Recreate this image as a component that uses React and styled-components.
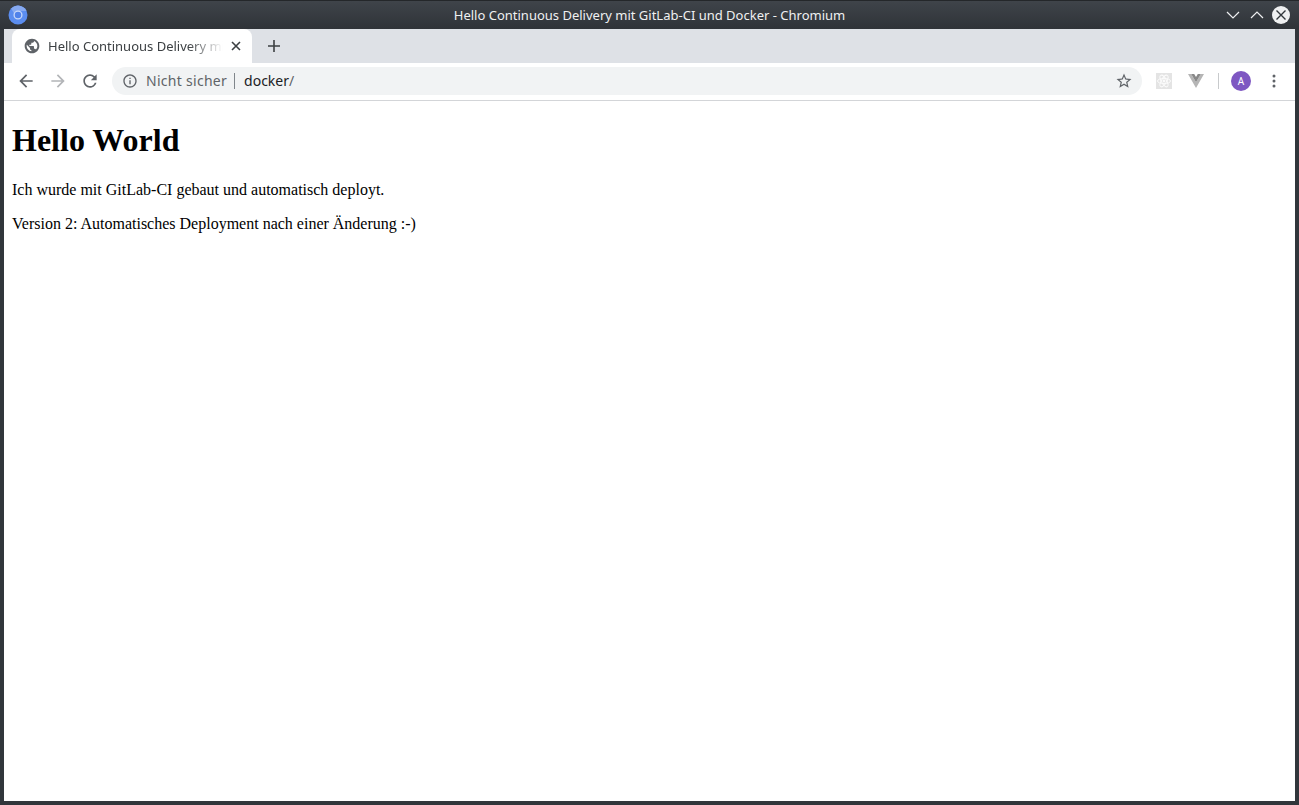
import styled, { createGlobalStyle } from "styled-components";

const GlobalStyle = createGlobalStyle`
  html, body {
    margin: 0;
    padding: 0;
    background: #31363b;
  }
`;

const Window = styled.div`
  width: 1299px;
  height: 805px;
  display: flex;
  flex-direction: column;
  overflow: hidden;
  background: #31363b;
`;

const TitleBar = styled.div`
  height: 29px;
  flex: none;
  display: grid;
  grid-template-columns: 1fr auto 1fr;
  align-items: center;
  padding: 0 9px 1px 8px;
  box-sizing: border-box;
  background: linear-gradient(#3f444a, #2f3338);
  border-top: 1px solid #24272a;
`;

const TitleText = styled.div`
  color: #eff0f1;
  font: 13px/16px "Noto Sans", sans-serif;
  padding-left: 1px;
`;

const WindowControls = styled.div`
  display: flex;
  align-items: center;
  justify-content: flex-end;
  gap: 10px;
`;

const CloseSvg = styled.svg`
  margin-left: -2px;
`;

const Body = styled.div`
  flex: 1;
  display: flex;
  flex-direction: column;
  margin: 0 4px 4px;
  background: #fff;
  min-height: 0;
`;

const TabStrip = styled.div`
  height: 34px;
  flex: none;
  display: flex;
  background: #dee1e6;
  padding-left: 8px;
  align-items: flex-end;
`;

const Tab = styled.div`
  width: 240px;
  height: 34px;
  box-sizing: border-box;
  background: #fff;
  border-radius: 8px 8px 0 0;
  display: flex;
  align-items: center;
  padding: 0 11px 0 12px;
  gap: 8px;
`;

const TabTitle = styled.div`
  flex: 1;
  min-width: 0;
  white-space: nowrap;
  font: 13px/16px "Noto Sans", sans-serif;
  color: #3c4043;
  -webkit-mask-image: linear-gradient(90deg, #000 80%, transparent 100%);
  mask-image: linear-gradient(90deg, #000 80%, transparent 100%);
`;

const NewTab = styled.div`
  margin-left: 16px;
  height: 34px;
  display: flex;
  align-items: center;
`;

const Toolbar = styled.div`
  height: 38px;
  flex: none;
  box-sizing: border-box;
  display: flex;
  align-items: center;
  background: #fff;
  border-bottom: 1px solid #d3d5d8;
  padding: 0 0 1px 12px;
`;

const NavButtons = styled.div`
  display: flex;
  align-items: center;
  gap: 12px;
  margin-right: 12px;
`;

const Omnibox = styled.div`
  width: 1030px;
  height: 28px;
  box-sizing: border-box;
  border-radius: 14px;
  background: #f1f3f4;
  display: flex;
  align-items: center;
  padding: 0 9px 0 10px;
`;

const SecurityLabel = styled.span`
  margin-left: 8px;
  font: 14px/28px "Noto Sans", sans-serif;
  letter-spacing: 0.28px;
  color: #5f6368;
`;

const Divider = styled.span`
  width: 1px;
  height: 16px;
  flex: none;
  margin-left: ${(p) => p.$gap}px;
  background: ${(p) => p.$color || "#80868b"};
`;

const Url = styled.span`
  margin-left: 9px;
  flex: 1;
  font: 14px/28px "Noto Sans", sans-serif;
  color: #202124;

  span {
    color: #5f6368;
  }
`;

const ToolbarIcons = styled.div`
  display: flex;
  align-items: center;
  margin-left: 14px;
`;

const Avatar = styled.div`
  width: 20px;
  height: 20px;
  border-radius: 50%;
  background: #7e57c2;
  color: #fff;
  font: 10px/20px "Noto Sans", sans-serif;
  text-align: center;
  margin: 0 21px 0 12px;
`;

const Page = styled.main`
  flex: 1;
  padding: 8px;
  font-family: "Liberation Serif", serif;
  font-size: 16px;
  color: #000;
  background: #fff;
`;

const Heading = styled.h1`
  font-size: 32px;
  font-weight: bold;
  line-height: 37px;
  margin: 13px 0 22px;
`;

const Paragraph = styled.p`
  margin: 0 0 16px;
  line-height: 18px;
`;

const ChromiumLogo = () => (
  <svg width="20" height="20" viewBox="0 0 20 20">
    <circle cx="10" cy="10" r="9.5" fill="#5b8def" />
    <path d="M3.2 3.4A9.5 9.5 0 0 1 18.6 6H10a4.5 4.5 0 0 0-4 2.5z" fill="#86a9f0" />
    <circle cx="10" cy="10" r="3.9" fill="#4f82ea" stroke="#c8d8f8" strokeWidth="1.3" />
  </svg>
);

const Chevron = ({ up }) => (
  <svg width="14" height="14" viewBox="0 0 14 14" fill="none" stroke="#eff0f1" strokeWidth="1.2">
    <path d={up ? "M1 10l6-6 6 6" : "M1 4l6 6 6-6"} />
  </svg>
);

const CloseCircle = () => (
  <CloseSvg width="18" height="18" viewBox="0 0 18 18">
    <circle cx="9" cy="9" r="9" fill="#eff0f1" />
    <path d="M4.5 4.5l9 9M13.5 4.5l-9 9" stroke="#31363b" strokeWidth="1.4" />
  </CloseSvg>
);

const GlobeIcon = () => (
  <svg width="16" height="16" viewBox="0 0 24 24" fill="#5f6368">
    <path d="M12 1C5.93 1 1 5.93 1 12s4.93 11 11 11 11-4.93 11-11S18.07 1 12 1zm-1 18.93c-3.95-.49-7-3.85-7-7.93 0-.62.08-1.21.21-1.79L9 15v1c0 1.1.9 2 2 2v1.93zm6.9-2.54c-.26-.81-1-1.39-1.9-1.39h-1v-3c0-.55-.45-1-1-1H8v-2h2c.55 0 1-.45 1-1V7h2c1.1 0 2-.9 2-2v-.41c2.93 1.19 5 4.06 5 7.41 0 2.08-.8 3.97-2.1 5.39z" />
  </svg>
);

const TabClose = () => (
  <svg width="10" height="10" viewBox="0 0 10 10" stroke="#3c4043" strokeWidth="1.6">
    <path d="M1 1l8 8M9 1l-8 8" />
  </svg>
);

const PlusIcon = () => (
  <svg width="12" height="12" viewBox="0 0 12 12" stroke="#3c4043" strokeWidth="1.6">
    <path d="M6 0v12M0 6h12" />
  </svg>
);

const ArrowIcon = ({ forward }) => (
  <svg width="20" height="20" viewBox="0 0 24 24" fill={forward ? "#b3b5b8" : "#5f6368"}>
    <path
      d="M20 11H7.83l5.59-5.59L12 4l-8 8 8 8 1.41-1.41L7.83 13H20v-2z"
      transform={forward ? "matrix(-1 0 0 1 24 0)" : undefined}
    />
  </svg>
);

const ReloadIcon = () => (
  <svg width="20" height="20" viewBox="0 0 24 24" fill="#5f6368">
    <path d="M17.65 6.35A7.958 7.958 0 0 0 12 4c-4.42 0-7.99 3.58-7.99 8s3.57 8 7.99 8c3.73 0 6.84-2.55 7.73-6h-2.08A5.99 5.99 0 0 1 12 18c-3.31 0-6-2.69-6-6s2.69-6 6-6c1.66 0 3.14.69 4.22 1.78L13 11h7V4l-2.35 2.35z" />
  </svg>
);

const InfoIcon = () => (
  <svg width="16" height="16" viewBox="0 0 24 24" fill="#5f6368">
    <path d="M11 7h2v2h-2zm0 4h2v6h-2zm1-9C6.48 2 2 6.48 2 12s4.48 10 10 10 10-4.48 10-10S17.52 2 12 2zm0 18c-4.41 0-8-3.59-8-8s3.59-8 8-8 8 3.59 8 8-3.59 8-8 8z" />
  </svg>
);

const StarIcon = () => (
  <svg width="18" height="18" viewBox="0 0 24 24" fill="#5f6368">
    <path d="M22 9.24l-7.19-.62L12 2 9.19 8.63 2 9.24l5.46 4.73L5.82 21 12 17.27 18.18 21l-1.63-7.03L22 9.24zM12 15.4l-3.76 2.27 1-4.28-3.32-2.88 4.38-.38L12 6.1l1.71 4.04 4.38.38-3.32 2.88 1 4.28L12 15.4z" />
  </svg>
);

const ExtensionSvg = styled.svg`
  margin-right: ${(p) => p.$gap || 0}px;
`;

const ReactExtension = () => (
  <ExtensionSvg $gap={16} width="16" height="16" viewBox="0 0 16 16">
    <rect width="16" height="16" fill="#e4e4e4" />
    <g fill="none" stroke="#fbfbfb" strokeWidth="1">
      <ellipse cx="8" cy="8" rx="6.5" ry="2.6" />
      <ellipse cx="8" cy="8" rx="6.5" ry="2.6" transform="rotate(60 8 8)" />
      <ellipse cx="8" cy="8" rx="6.5" ry="2.6" transform="rotate(120 8 8)" />
    </g>
    <circle cx="8" cy="8" r="1.4" fill="#fbfbfb" />
  </ExtensionSvg>
);

const VueExtension = () => (
  <ExtensionSvg width="16" height="14" viewBox="0 0 16 14">
    <path d="M0 0h3.2L8 8.2 12.8 0H16L8 14z" fill="#b5b5b5" />
    <path d="M3.2 0h3L8 3.1 9.8 0h3L8 8.2z" fill="#888" />
  </ExtensionSvg>
);

const MenuIcon = () => (
  <svg width="4" height="14" viewBox="0 0 4 14" fill="#5f6368">
    <circle cx="2" cy="2" r="1.5" />
    <circle cx="2" cy="7" r="1.5" />
    <circle cx="2" cy="12" r="1.5" />
  </svg>
);

const App = () => (
  <Window>
    <GlobalStyle />
    <TitleBar>
      <ChromiumLogo />
      <TitleText>Hello Continuous Delivery mit GitLab-CI und Docker - Chromium</TitleText>
      <WindowControls>
        <Chevron />
        <Chevron up />
        <CloseCircle />
      </WindowControls>
    </TitleBar>
    <Body>
      <TabStrip>
        <Tab>
          <GlobeIcon />
          <TabTitle>Hello Continuous Delivery mit</TabTitle>
          <TabClose />
        </Tab>
        <NewTab>
          <PlusIcon />
        </NewTab>
      </TabStrip>
      <Toolbar>
        <NavButtons>
          <ArrowIcon />
          <ArrowIcon forward />
          <ReloadIcon />
        </NavButtons>
        <Omnibox>
          <InfoIcon />
          <SecurityLabel>Nicht sicher</SecurityLabel>
          <Divider $gap={7} />
          <Url>
            docker<span>/</span>
          </Url>
          <StarIcon />
        </Omnibox>
        <ToolbarIcons>
          <ReactExtension />
          <VueExtension />
          <Divider $gap={14} $color="#c8cacc" />
          <Avatar>A</Avatar>
          <MenuIcon />
        </ToolbarIcons>
      </Toolbar>
      <Page>
        <Heading>Hello World</Heading>
        <Paragraph>Ich wurde mit GitLab-CI gebaut und automatisch deployt.</Paragraph>
        <Paragraph>Version 2: Automatisches Deployment nach einer Änderung :-)</Paragraph>
      </Page>
    </Body>
  </Window>
);

export default App;
